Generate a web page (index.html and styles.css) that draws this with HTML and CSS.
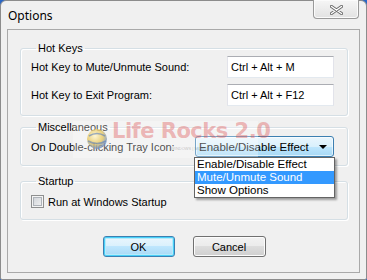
FILE: index.html
```html
<!DOCTYPE html>
<html>
<head>
<meta charset="utf-8">
<link rel="stylesheet" href="styles.css">
</head>
<body>
<div class="window">
  <div class="titlebar">
    <span class="title">Options</span>
    <div class="close">
      <svg width="13" height="10" viewBox="0 0 13 10">
        <path d="M1.5 1.5 L11.5 8.5 M11.5 1.5 L1.5 8.5" stroke="#6a6a6a" stroke-width="3.2" stroke-linecap="round" fill="none"/>
        <path d="M1.5 1.5 L11.5 8.5 M11.5 1.5 L1.5 8.5" stroke="#ffffff" stroke-width="1.4" stroke-linecap="round" fill="none"/>
      </svg>
    </div>
  </div>
  <div class="panel">
    <fieldset class="group hotkeys">
      <legend>Hot Keys</legend>
      <div class="row">
        <span class="label">Hot Key to Mute/Unmute Sound:</span>
        <div class="textbox">Ctrl + Alt + M</div>
      </div>
      <div class="row">
        <span class="label">Hot Key to Exit Program:</span>
        <div class="textbox">Ctrl + Alt + F12</div>
      </div>
    </fieldset>
    <fieldset class="group misc">
      <legend>Miscellaneous</legend>
      <div class="row">
        <span class="label">On Double-clicking Tray Icon:</span>
        <div class="combo-wrap">
          <div class="combo"><span>Enable/Disable Effect</span><span class="arrow"></span></div>
          <ul class="dropdown">
            <li>Enable/Disable Effect</li>
            <li class="selected">Mute/Unmute Sound</li>
            <li>Show Options</li>
          </ul>
        </div>
      </div>
    </fieldset>
    <fieldset class="group startup">
      <legend>Startup</legend>
      <div class="check-row">
        <span class="checkbox"></span>
        <span class="label">Run at Windows Startup</span>
      </div>
    </fieldset>
    <div class="buttons">
      <div class="btn default">OK</div>
      <div class="btn">Cancel</div>
    </div>
  </div>
  <div class="watermark">
    <div class="wm-glow"></div>
    <svg class="globe" width="22" height="22" viewBox="0 0 22 22">
      <defs>
        <radialGradient id="g" cx="40%" cy="35%" r="65%">
          <stop offset="0" stop-color="#fff6cc"/>
          <stop offset="0.6" stop-color="#e8c860"/>
          <stop offset="1" stop-color="#6f8fc8"/>
        </radialGradient>
      </defs>
      <circle cx="11" cy="11" r="10" fill="url(#g)" opacity="0.8"/>
      <path d="M3 8 Q11 3 19 8 M2 13 Q11 18 20 13" stroke="#5a7fc0" stroke-width="1.5" fill="none" opacity="0.6"/>
    </svg>
    <span class="wm-text">Life Rocks 2.0</span>
    <span class="wm-sub">WINDOWS | MOBILE</span>
  </div>
</div>
</body>
</html>
```
FILE: styles.css
```css
html, body {
  margin: 0;
  padding: 0;
}
body {
  width: 367px;
  height: 280px;
  background: #2a67c5;
  font-family: "Liberation Sans", Arial, sans-serif;
  font-size: 11px;
  color: #000;
  overflow: hidden;
}
.window {
  position: relative;
  box-sizing: border-box;
  width: 367px;
  height: 280px;
  background: #f0f0f0;
  border: 1px solid #8c8c8c;
  border-radius: 6px 6px 2px 2px;
  display: flex;
  flex-direction: column;
}
.titlebar {
  height: 28px;
  display: flex;
  align-items: flex-start;
  justify-content: space-between;
}
.title {
  font-family: "Noto Sans", "Open Sans", sans-serif;
  font-size: 12px;
  margin: 7px 0 0 7px;
  line-height: 16px;
}
.close {
  box-sizing: border-box;
  width: 46px;
  height: 19px;
  margin: -1px 7px 0 0;
  border: 1px solid #9a9a9a;
  border-top: none;
  border-radius: 0 0 4px 4px;
  background: linear-gradient(#f6f6f6, #ececec 50%, #e2e2e2);
  box-shadow: inset 0 0 0 1px #fbfbfb;
  display: flex;
  align-items: center;
  justify-content: center;
  padding-top: 1px;
}
.panel {
  flex: 1;
  margin: 0 6px 6px 6px;
  border: 1px solid #a9a9a9;
  padding: 12px 11px 12px 12px;
  display: flex;
  flex-direction: column;
}
.group {
  margin: 0;
  border: 1px solid #d5dfe5;
  border-radius: 3px;
  box-shadow: inset 1px 1px 0 #fff, 1px 1px 0 #fff;
  min-width: 0;
}
.group legend {
  padding: 0 2px;
  margin-left: 5px;
  line-height: 13px;
  height: 13px;
}
.hotkeys {
  padding: 1px 13px 9px 10px;
  display: flex;
  flex-direction: column;
  gap: 6px;
}
.misc {
  margin-top: 5px;
  padding: 2px 13px 8px 10px;
}
.startup {
  margin-top: 9px;
  padding: 7px 13px 11px 10px;
}
.row {
  display: flex;
  align-items: center;
  justify-content: space-between;
}
.textbox {
  box-sizing: border-box;
  width: 107px;
  height: 22px;
  background: #fff;
  border: 1px solid #e2e3ea;
  border-top-color: #abadb3;
  border-bottom-color: #e3e9ef;
  padding: 0 3px;
  line-height: 20px;
}
.combo-wrap {
  position: relative;
}
.combo {
  box-sizing: border-box;
  width: 139px;
  height: 21px;
  border: 1px solid #3c7fb1;
  border-radius: 3px;
  background: linear-gradient(#eaf6fd, #d9f0fc 50%, #bee6fd 50%, #a7d9f5);
  box-shadow: inset 0 0 0 1px rgba(255, 255, 255, 0.6);
  display: flex;
  align-items: center;
  justify-content: space-between;
  padding: 0 6px 0 3px;
  font-size: 11.5px;
}
.arrow {
  width: 0;
  height: 0;
  border-left: 4px solid transparent;
  border-right: 4px solid transparent;
  border-top: 4px solid #000;
}
.dropdown {
  position: absolute;
  top: 21px;
  left: -1px;
  box-sizing: border-box;
  width: 141px;
  margin: 0;
  padding: 0;
  list-style: none;
  background: #fff;
  border: 1px solid #646464;
  box-shadow: 2px 2px 2px rgba(0, 0, 0, 0.35);
  z-index: 5;
}
.dropdown li {
  height: 13px;
  line-height: 13px;
  padding-left: 2px;
  font-size: 11.5px;
}
.dropdown li.selected {
  background: #3399ff;
  color: #fff;
}
.check-row {
  display: flex;
  align-items: center;
  gap: 4px;
  height: 13px;
}
.checkbox {
  box-sizing: border-box;
  width: 13px;
  height: 13px;
  border: 1px solid #8e8f8f;
  background: linear-gradient(135deg, #cbcfd5, #f6f6f6);
  box-shadow: inset 0 0 0 1px #f4f4f4, inset 0 0 0 2px #aeb3b9;
}
.buttons {
  margin-top: 16px;
  display: flex;
  justify-content: center;
  gap: 18px;
}
.btn {
  box-sizing: border-box;
  width: 73px;
  height: 21px;
  border: 1px solid #707070;
  border-radius: 3px;
  background: linear-gradient(#f2f2f2, #ebebeb 50%, #dddddd 50%, #cfcfcf);
  box-shadow: inset 0 0 0 1px #fcfcfc;
  display: flex;
  align-items: center;
  justify-content: center;
}
.btn.default {
  width: 72px;
  border-color: #3c7fb1;
  background: linear-gradient(#eaf6fd, #d9f0fc 50%, #bee6fd 50%, #a7d9f5);
  box-shadow: inset 0 0 0 1px #48d0f8, inset 0 0 0 2px #b6eafb;
}
.watermark {
  position: absolute;
  left: 72px;
  top: 120px;
  width: 185px;
  height: 37px;
  pointer-events: none;
}
.wm-glow {
  position: absolute;
  inset: 0;
  background: rgba(255, 255, 255, 0.3);
}
.globe {
  position: absolute;
  left: 13px;
  top: 7px;
}
.wm-text {
  position: absolute;
  left: 39px;
  top: -2px;
  font-family: "DejaVu Sans", sans-serif;
  font-size: 21px;
  font-weight: bold;
  letter-spacing: -0.5px;
  color: rgba(220, 80, 80, 0.4);
  white-space: nowrap;
}
.wm-sub {
  position: absolute;
  left: 98px;
  top: 25px;
  font-size: 4px;
  color: rgba(120, 120, 120, 0.45);
  white-space: nowrap;
}
```
